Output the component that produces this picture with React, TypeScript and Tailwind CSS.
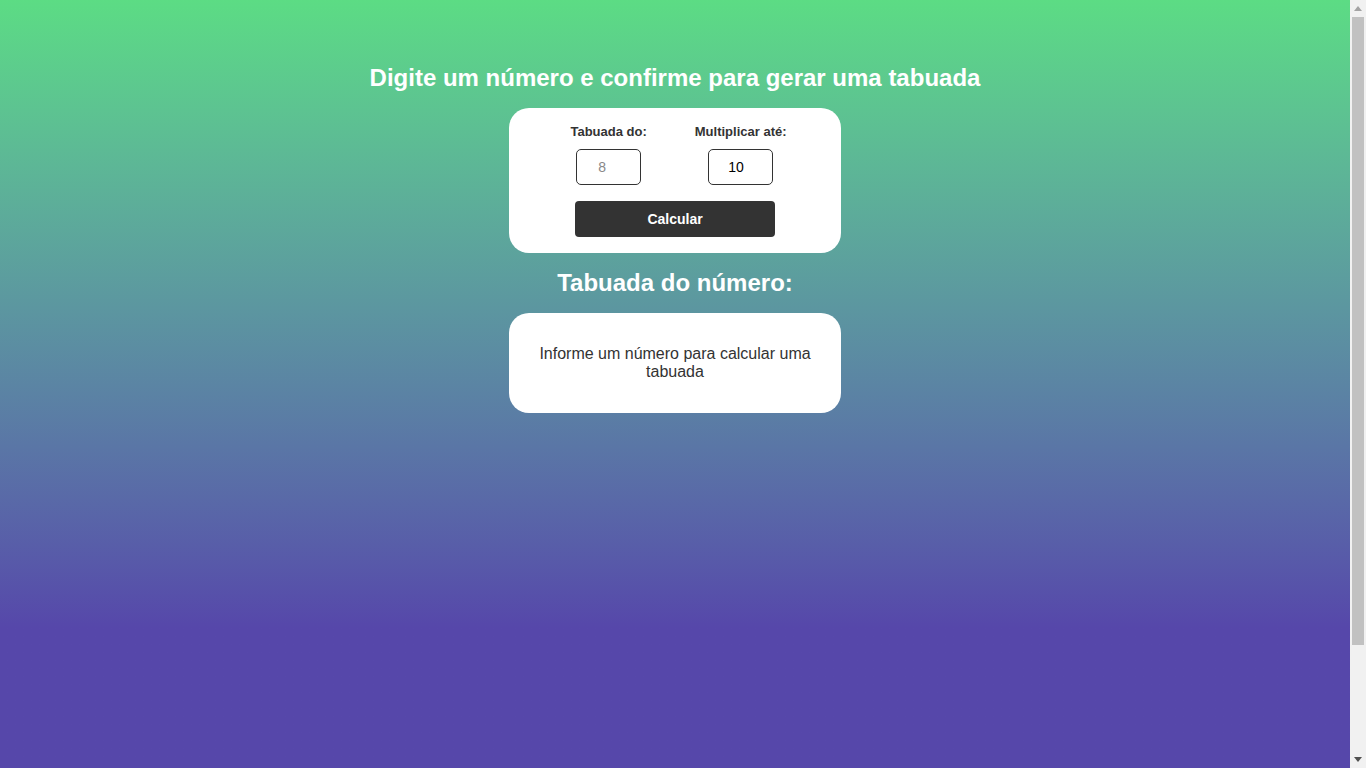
import { useState } from "react";

const App = () => {
  const [numero, setNumero] = useState("");
  const [limite, setLimite] = useState("10");

  return (
    <div className="h-screen w-full flex overflow-hidden font-['Liberation_Sans',Arial,sans-serif]">
      <div className="flex-1 overflow-hidden">
        <div className="min-h-[897px] w-full bg-linear-to-b from-[#5cdc84] to-[#5647aa] to-[70%]">
          <div className="flex flex-col items-center gap-4 pt-16">
            <h1 className="text-[24px] leading-[28px] font-bold text-white">
              Digite um número e confirme para gerar uma tabuada
            </h1>

            {/* Form card */}
            <div className="w-[332px] h-[145px] bg-white rounded-[20px] flex flex-col items-center pt-4">
              <div className="flex gap-[48px] pl-[7px]">
                <div className="flex flex-col items-center">
                  <label className="text-[13px] leading-[15px] font-bold text-[#333]">Tabuada do:</label>
                  <input
                    type="text"
                    placeholder="8"
                    value={numero}
                    onChange={(e) => setNumero(e.target.value)}
                    className="mt-[10px] w-[65px] h-[36px] border border-[#333] rounded-[5px] pl-[21px] text-[14px] text-black placeholder:text-[#888] outline-none"
                  />
                </div>
                <div className="flex flex-col items-center">
                  <label className="text-[13px] leading-[15px] font-bold text-[#333]">Multiplicar até:</label>
                  <input
                    type="text"
                    value={limite}
                    onChange={(e) => setLimite(e.target.value)}
                    className="mt-[10px] w-[65px] h-[36px] border border-[#333] rounded-[5px] pl-[19px] text-[14px] text-black outline-none"
                  />
                </div>
              </div>
              <button className="mt-4 w-[200px] h-[36px] bg-[#333] rounded-[4px] text-white text-[14px] font-bold">
                Calcular
              </button>
            </div>

            <h2 className="text-[24px] leading-[28px] font-bold text-white">Tabuada do número:</h2>

            {/* Result card */}
            <div className="w-[332px] h-[100px] bg-white rounded-[20px] px-[30px] flex items-center justify-center">
              <p className="text-[16px] leading-[18px] text-[#333] text-center">
                Informe um número para calcular uma tabuada
              </p>
            </div>
          </div>
        </div>
      </div>

      {/* scrollbar */}
      <div className="w-[16px] h-full bg-[#f1f1f1] flex flex-col items-center">
        <div className="h-[17px] w-full flex items-center justify-center">
          <svg width="8" height="5" viewBox="0 0 8 5"><path d="M0 5 L4 0 L8 5 Z" fill="#a3a3a3" /></svg>
        </div>
        <div className="w-[12px] h-[628px] bg-[#c1c1c1]" />
        <div className="flex-1" />
        <div className="h-[17px] w-full flex items-center justify-center">
          <svg width="8" height="5" viewBox="0 0 8 5"><path d="M0 0 L8 0 L4 5 Z" fill="#505050" /></svg>
        </div>
      </div>
    </div>
  );
};

export default App;
